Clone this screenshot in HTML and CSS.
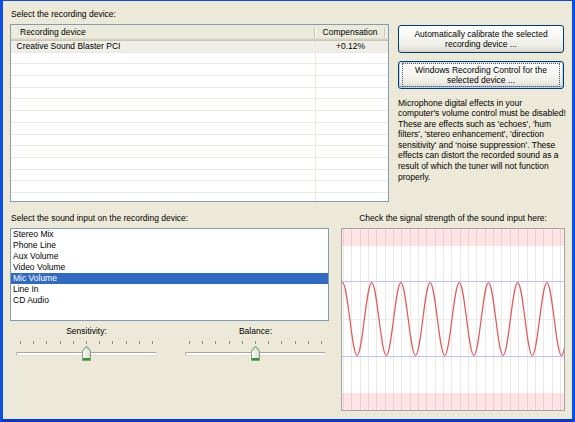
FILE: index.html
```html
<!DOCTYPE html>
<html>
<head>
<meta charset="utf-8">
<link rel="stylesheet" href="styles.css">
</head>
<body>
<div class="window">
  <div class="top">
    <div class="devices">
      <div class="label">Select the recording device:</div>
      <div class="table">
        <div class="thead">
          <div class="th th-name">Recording device</div>
          <div class="th th-comp">Compensation</div>
        </div>
        <div class="row sel"><div class="td td-name">Creative Sound Blaster PCI</div><div class="td td-comp">+0.12%</div></div>
        <div class="row"><div class="td td-name"></div><div class="td td-comp"></div></div>
        <div class="row"><div class="td td-name"></div><div class="td td-comp"></div></div>
        <div class="row"><div class="td td-name"></div><div class="td td-comp"></div></div>
        <div class="row"><div class="td td-name"></div><div class="td td-comp"></div></div>
        <div class="row"><div class="td td-name"></div><div class="td td-comp"></div></div>
        <div class="row"><div class="td td-name"></div><div class="td td-comp"></div></div>
        <div class="row"><div class="td td-name"></div><div class="td td-comp"></div></div>
        <div class="row"><div class="td td-name"></div><div class="td td-comp"></div></div>
        <div class="row"><div class="td td-name"></div><div class="td td-comp"></div></div>
        <div class="row"><div class="td td-name"></div><div class="td td-comp"></div></div>
        <div class="row"><div class="td td-name"></div><div class="td td-comp"></div></div>
        <div class="row"><div class="td td-name"></div><div class="td td-comp"></div></div>
        <div class="row"><div class="td td-name"></div><div class="td td-comp"></div></div>
      </div>
    </div>
    <div class="side">
      <button class="btn"><span class="btn-in">Automatically calibrate the selected<br>recording device ...</span></button>
      <button class="btn default"><span class="btn-in focus">Windows Recording Control for the<br>selected device ...</span></button>
      <p class="note">Microphone digital effects in your<br>computer's volume control must be disabled!<br>These are effects such as 'echoes', 'hum<br>filters', 'stereo enhancement', 'direction<br>sensitivity' and 'noise suppression'. These<br>effects can distort the recorded sound as a<br>result of which the tuner will not function<br>properly.</p>
    </div>
  </div>
  <div class="bottom">
    <div class="inputs">
      <div class="label">Select the sound input on the recording device:</div>
      <ul class="listbox">
        <li>Stereo Mix</li>
        <li>Phone Line</li>
        <li>Aux Volume</li>
        <li>Video Volume</li>
        <li class="sel">Mic Volume</li>
        <li>Line In</li>
        <li>CD Audio</li>
      </ul>
      <div class="sliders">
        <div class="slider">
          <div class="cap">Sensitivity:</div>
          <div class="ticks"><i></i><i></i><i></i><i></i><i></i><i></i><i></i><i></i><i></i><i></i><i></i></div>
          <div class="track">
            <svg class="thumb" viewBox="0 0 11 16" width="11" height="16">
              <defs><linearGradient id="tg1" x1="0" x2="1" y1="0" y2="0"><stop offset="0" stop-color="#ffffff"/><stop offset="1" stop-color="#d9d8d0"/></linearGradient></defs>
              <path d="M1.5 5.5 L5.5 1 L9.5 5.5 V15.5 H1.5 Z" fill="url(#tg1)" stroke="#8f9a8c"/>
              <path d="M2.5 5.5 L5.5 2.2 L8.5 5.5" fill="none" stroke="#7ccf7c"/>
              <rect x="2" y="13" width="7" height="2" fill="#21a121"/>
            </svg>
          </div>
        </div>
        <div class="slider">
          <div class="cap">Balance:</div>
          <div class="ticks"><i></i><i></i><i></i><i></i><i></i><i></i><i></i><i></i><i></i><i></i><i></i></div>
          <div class="track">
            <svg class="thumb" viewBox="0 0 11 16" width="11" height="16">
              <defs><linearGradient id="tg2" x1="0" x2="1" y1="0" y2="0"><stop offset="0" stop-color="#ffffff"/><stop offset="1" stop-color="#d9d8d0"/></linearGradient></defs>
              <path d="M1.5 5.5 L5.5 1 L9.5 5.5 V15.5 H1.5 Z" fill="url(#tg2)" stroke="#8f9a8c"/>
              <path d="M2.5 5.5 L5.5 2.2 L8.5 5.5" fill="none" stroke="#7ccf7c"/>
              <rect x="2" y="13" width="7" height="2" fill="#21a121"/>
            </svg>
          </div>
        </div>
      </div>
    </div>
    <div class="signal">
      <div class="label">Check the signal strength of the sound input here:</div>
      <div class="graph">
        <svg width="222" height="181" viewBox="0 0 222 181">
          <rect x="0" y="0" width="222" height="17" fill="#ffe3e5"/>
          <rect x="0" y="164" width="222" height="17" fill="#ffe3e5"/>
          <path d="M1.5 0V181M9.5 0V181M18.5 0V181M26.5 0V181M34.5 0V181M43.5 0V181M51.5 0V181M59.5 0V181M68.5 0V181M76.5 0V181M84.5 0V181M93.5 0V181M101.5 0V181M109.5 0V181M118.5 0V181M126.5 0V181M134.5 0V181M143.5 0V181M151.5 0V181M159.5 0V181M168.5 0V181M176.5 0V181M185.5 0V181M193.5 0V181M201.5 0V181M210.5 0V181M218.5 0V181" stroke="rgba(0,0,0,0.085)" stroke-width="1"/>
          <path d="M0 90.5H222" stroke="#ededed" stroke-width="1"/>
          <path d="M0 52.5H222M0 127.5H222" stroke="#bcbcff" stroke-width="1"/>
          <path fill="none" stroke="#e35a5a" stroke-width="1.25" d="M-28.7 53.5
            c2.642 0 4.919 17.8 7.3 36.5 c2.381 18.7 4.658 36.5 7.3 36.5 c2.642 0 4.919 -17.8 7.3 -36.5 c2.381 -18.7 4.658 -36.5 7.3 -36.5
            c2.642 0 4.919 17.8 7.3 36.5 c2.381 18.7 4.658 36.5 7.3 36.5 c2.642 0 4.919 -17.8 7.3 -36.5 c2.381 -18.7 4.658 -36.5 7.3 -36.5
            c2.642 0 4.919 17.8 7.3 36.5 c2.381 18.7 4.658 36.5 7.3 36.5 c2.642 0 4.919 -17.8 7.3 -36.5 c2.381 -18.7 4.658 -36.5 7.3 -36.5
            c2.642 0 4.919 17.8 7.3 36.5 c2.381 18.7 4.658 36.5 7.3 36.5 c2.642 0 4.919 -17.8 7.3 -36.5 c2.381 -18.7 4.658 -36.5 7.3 -36.5
            c2.642 0 4.919 17.8 7.3 36.5 c2.381 18.7 4.658 36.5 7.3 36.5 c2.642 0 4.919 -17.8 7.3 -36.5 c2.381 -18.7 4.658 -36.5 7.3 -36.5
            c2.642 0 4.919 17.8 7.3 36.5 c2.381 18.7 4.658 36.5 7.3 36.5 c2.642 0 4.919 -17.8 7.3 -36.5 c2.381 -18.7 4.658 -36.5 7.3 -36.5
            c2.642 0 4.919 17.8 7.3 36.5 c2.381 18.7 4.658 36.5 7.3 36.5 c2.642 0 4.919 -17.8 7.3 -36.5 c2.381 -18.7 4.658 -36.5 7.3 -36.5
            c2.642 0 4.919 17.8 7.3 36.5 c2.381 18.7 4.658 36.5 7.3 36.5 c2.642 0 4.919 -17.8 7.3 -36.5 c2.381 -18.7 4.658 -36.5 7.3 -36.5
            c2.642 0 4.919 17.8 7.3 36.5 c2.381 18.7 4.658 36.5 7.3 36.5 c2.642 0 4.919 -17.8 7.3 -36.5 c2.381 -18.7 4.658 -36.5 7.3 -36.5"/>
        </svg>
      </div>
    </div>
  </div>
</div>
</body>
</html>
```
FILE: styles.css
```css
* { box-sizing: border-box; }
html, body { margin: 0; padding: 0; }
body {
  font-family: "Liberation Sans", Arial, sans-serif;
  font-size: 8.5px;
  color: #000;
  background: #ECE9D8;
}
.window {
  width: 575px;
  height: 422px;
  background: #ECE9D8;
  border-style: solid;
  border-width: 1px 3px 3px 3px;
  border-color: #0A4FE1 #0B50E2 #0838C8 #0B50E2;
  padding: 8px 0 0 7px;
  overflow: hidden;
}
.top { display: flex; align-items: flex-start; }
.devices { width: 379px; }
.label { line-height: 11px; height: 11px; white-space: nowrap; }
.devices .label { padding-left: 1px; margin-bottom: 4px; }

.table {
  width: 379px;
  height: 178px;
  border: 1px solid #7F9DB9;
  background: #fff;
  overflow: hidden;
}
.thead {
  display: flex;
  height: 16px;
  background: #EBEADB;
  box-shadow: inset 0 -1px #CBC7B8, inset 0 -2px #D6D2C2, inset 0 -3px #E2DECD;
}
.th { position: relative; line-height: 15px; white-space: nowrap; }
.th-name { width: 304px; padding-left: 9px; }
.th-comp { width: 70px; text-align: center; }
.th::after {
  content: "";
  position: absolute;
  right: 0;
  top: 3px;
  width: 1px;
  height: 10px;
  background: #C7C5B2;
  box-shadow: 1px 0 #fff;
}
.row {
  display: flex;
  height: 11.7px;
  border-bottom: 1px solid #ECEAE0;
  line-height: 10.7px;
  white-space: nowrap;
}
.row.sel { background: #EFEEE7; }
.td-name { width: 304px; padding-left: 5.5px; }
.td-comp { width: 70px; border-left: 1px solid #ECEAE0; text-align: center; }

.side { width: 166px; margin-left: 9px; }
.btn {
  display: block;
  width: 166px;
  height: 28px;
  margin: 16px 0 0;
  padding: 0;
  border: 1px solid #003C74;
  border-radius: 3px;
  background: linear-gradient(#FFFFFF 0%, #F6F6F2 45%, #ECEBE4 80%, #D8D4C8 100%);
  font-family: "Liberation Sans", Arial, sans-serif;
  font-size: 8.5px;
  line-height: 10px;
  color: #000;
  text-align: center;
}
.btn + .btn { margin-top: 8px; }
.btn.default { box-shadow: inset 0 0 0 1px #BCD3F4, inset 0 -1px 0 1px #8FA9E6; }
.btn-in { display: block; white-space: nowrap; }
.btn-in.focus {
  margin: 0 3px;
  padding: 1px 0;
  border: 1px dotted #555;
}
.note {
  margin: 8.5px 0 0;
  line-height: 10.6px;
  white-space: nowrap;
}

.bottom { display: flex; margin-top: 11px; }
.inputs { width: 319px; }
.inputs .label { padding-left: 1px; margin-bottom: 4px; }
.listbox {
  height: 93px;
  margin: 0;
  padding: 0;
  list-style: none;
  border: 1px solid #7F9DB9;
  background: #fff;
}
.listbox li { height: 11px; line-height: 11px; padding-left: 2px; white-space: nowrap; }
.listbox li.sel { background: #316AC5; color: #fff; }

.sliders { display: flex; gap: 28px; padding-left: 6px; margin-top: 4.5px; }
.slider { width: 141px; }
.cap { text-align: center; line-height: 11px; }
.ticks {
  display: flex;
  justify-content: space-between;
  height: 3px;
  padding: 0 4px;
  margin-top: 4px;
}
.ticks i { display: block; width: 1px; height: 3px; background: #8E8E8E; }
.track {
  position: relative;
  height: 4px;
  margin-top: 8px;
  border: 1px solid #A9A79D;
  border-right-color: #E0DED4;
  border-bottom-color: #E0DED4;
  border-radius: 2px;
  background: #fff;
}
.thumb { position: absolute; left: 64px; top: -8px; display: block; }

.signal { width: 224px; margin-left: 12px; }
.signal .label { text-align: center; margin-bottom: 4px; }
.graph {
  width: 224px;
  height: 183px;
  border: 1px solid #A3A3A3;
  background: #fff;
  overflow: hidden;
}
.graph svg { display: block; }
```
